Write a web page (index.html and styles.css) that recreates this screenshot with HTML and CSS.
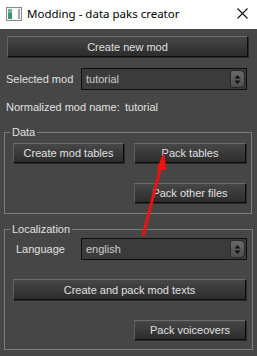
FILE: index.html
```html
<!DOCTYPE html>
<html>
<head>
<meta charset="utf-8">
<link rel="stylesheet" href="styles.css">
</head>
<body>
<div class="window">
  <div class="titlebar">
    <svg class="app-icon" width="16" height="14" viewBox="0 0 16 14">
      <rect x="0.5" y="0.5" width="15" height="13" fill="#f4f4f4" stroke="#8a8a8a"/>
      <rect x="2" y="2" width="4" height="10" fill="#3f8f7c"/>
      <rect x="2" y="2" width="4" height="4" fill="#6fb7a5"/>
      <rect x="7" y="2" width="5" height="10" fill="#ffffff"/>
      <rect x="12" y="2" width="2" height="10" fill="#a9a9a9"/>
    </svg>
    <span class="title">Modding - data paks creator</span>
    <svg class="close" width="11" height="11" viewBox="0 0 11 11">
      <path d="M0.5 0.5 L10.5 10.5 M10.5 0.5 L0.5 10.5" stroke="#111" stroke-width="1.1"/>
    </svg>
  </div>
  <div class="content">
    <button class="btn btn-wide">Create new mod</button>
    <div class="row mod-row">
      <span class="label">Selected mod</span>
      <div class="combo"><span class="combo-text">tutorial</span><span class="spin"><svg width="7" height="11" viewBox="0 0 7 11"><path d="M3.5 1 L6.5 4.5 L0.5 4.5 Z M3.5 10 L6.5 6.5 L0.5 6.5 Z" fill="#111"/></svg></span></div>
    </div>
    <div class="row norm-row">
      <span class="label norm-label">Normalized mod name:</span>
      <span class="norm-value">tutorial</span>
    </div>
    <fieldset class="group data-group">
      <legend>Data</legend>
      <div class="btn-grid">
        <button class="btn">Create mod tables</button>
        <button class="btn">Pack tables</button>
        <button class="btn btn-col2">Pack other files</button>
      </div>
    </fieldset>
    <fieldset class="group loc-group">
      <legend>Localization</legend>
      <div class="row lang-row">
        <span class="label lang-label">Language</span>
        <div class="combo combo-lang"><span class="combo-text">english</span><span class="spin"><svg width="7" height="11" viewBox="0 0 7 11"><path d="M3.5 1 L6.5 4.5 L0.5 4.5 Z M3.5 10 L6.5 6.5 L0.5 6.5 Z" fill="#111"/></svg></span></div>
      </div>
      <button class="btn btn-full">Create and pack mod texts</button>
      <div class="btn-grid single">
        <button class="btn btn-col2">Pack voiceovers</button>
      </div>
    </fieldset>
  </div>
  <svg class="arrow" width="257" height="356" viewBox="0 0 257 356">
    <line x1="143" y1="236" x2="161" y2="166" stroke="#f01010" stroke-width="3"/>
    <polygon points="164,152 156.5,169 166.5,170" fill="#f01010"/>
  </svg>
</div>
</body>
</html>
```
FILE: styles.css
```css
* { box-sizing: border-box; }
html, body { margin: 0; padding: 0; }
body {
  width: 257px;
  height: 356px;
  background: #464646;
  font-family: "Liberation Sans", Arial, sans-serif;
  font-size: 11px;
  color: #e0e0e0;
  overflow: hidden;
}
.window { position: relative; width: 257px; height: 356px; }
.titlebar {
  height: 29px;
  background: #ffffff;
  display: flex;
  align-items: center;
  padding-left: 6px;
  padding-right: 9px;
}
.app-icon { flex: none; margin-top: -2px; }
.title {
  margin-left: 5px;
  font-family: "Noto Sans", "Liberation Sans", sans-serif;
  font-size: 11.5px;
  color: #000;
  flex: 1;
  margin-top: -2px;
}
.close { flex: none; margin-top: -2px; }
.content {
  padding: 7px 10px 0 7px;
  display: flex;
  flex-direction: column;
}
.btn {
  font-family: "Liberation Sans", Arial, sans-serif;
  font-size: 11px;
  color: #e0e0e0;
  height: 21px;
  padding: 0;
  border: 1px solid;
  border-color: #6c6c6c #0c0c0c #0c0c0c #606060;
  background: linear-gradient(#474747, #2c2c2c);
  box-shadow: 1px 1px 0 #2a2a2a;
  display: block;
  width: 100%;
  text-align: center;
}
.btn-wide { width: 241px; }
.row { display: flex; align-items: center; }
.mod-row { margin-top: 11px; margin-left: -1px; }
.label { width: 75px; flex: none; }
.combo {
  width: 166px;
  height: 22px;
  border: 1px solid #0e0e0e;
  background: #3b3b3b;
  display: flex;
  align-items: center;
  justify-content: space-between;
  padding-left: 4px;
  padding-right: 1px;
  color: #cccccc;
}
.spin {
  width: 15px;
  height: 18px;
  background: linear-gradient(#6a6a6a, #4e4e4e);
  border: 1px solid #2a2a2a;
  border-radius: 2px 5px 5px 2px;
  display: flex;
  align-items: center;
  justify-content: center;
}
.norm-row { margin-top: 10px; margin-left: -1px; height: 14px; }
.norm-row .norm-label { width: 119px; }
.group {
  margin: 12px 0 0 -3px;
  width: 248px;
  border: 1px solid #7c7c7c;
  padding: 4px 5px 10px 8px;
}
.group legend {
  padding: 0 2px;
  margin-left: -3px;
  line-height: 13px;
  color: #e0e0e0;
}
.btn-grid {
  display: grid;
  grid-template-columns: 111px 112px;
  column-gap: 10px;
  row-gap: 20px;
}
.btn-grid .btn { height: 20px; }
.btn-col2 { grid-column: 2; }
.loc-group { margin-top: 9px; padding-bottom: 9px; }
.lang-row { margin-top: -2px; margin-left: 3px; }
.lang-label { width: 65px; }
.combo-lang { width: 166px; }
.btn-full { margin-top: 19px; width: 233px; }
.single { margin-top: 20px; }
.arrow { position: absolute; left: 0; top: 0; pointer-events: none; }
```
